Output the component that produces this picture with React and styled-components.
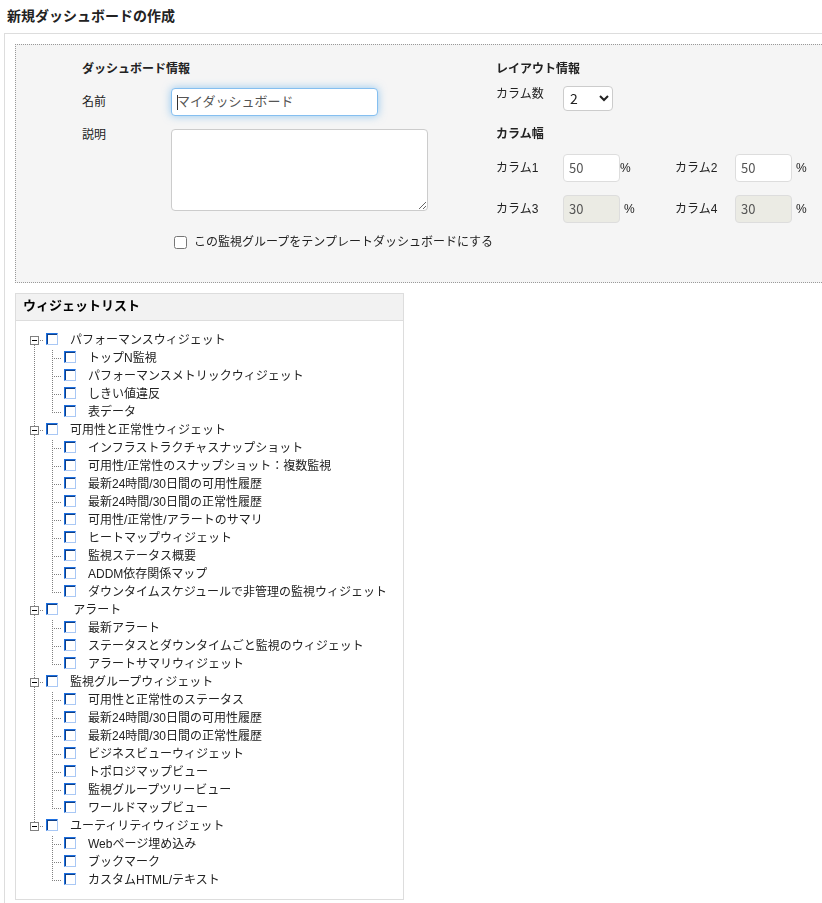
import React, { useState } from "react";
import styled, { createGlobalStyle, css } from "styled-components";

const COLORS = {
  text: "#222",
  muted: "#555",
  border: "#ddd",
  panel: "#f5f5f5",
  dots: "#999",
  tree: "#808080",
};

const GROUPS = [
  {
    name: "パフォーマンスウィジェット",
    items: ["トップN監視", "パフォーマンスメトリックウィジェット", "しきい値違反", "表データ"],
  },
  {
    name: "可用性と正常性ウィジェット",
    items: [
      "インフラストラクチャスナップショット",
      "可用性/正常性のスナップショット：複数監視",
      "最新24時間/30日間の可用性履歴",
      "最新24時間/30日間の正常性履歴",
      "可用性/正常性/アラートのサマリ",
      "ヒートマップウィジェット",
      "監視ステータス概要",
      "ADDM依存関係マップ",
      "ダウンタイムスケジュールで非管理の監視ウィジェット",
    ],
  },
  {
    name: " アラート",
    items: ["最新アラート", "ステータスとダウンタイムごと監視のウィジェット", "アラートサマリウィジェット"],
  },
  {
    name: "監視グループウィジェット",
    items: [
      "可用性と正常性のステータス",
      "最新24時間/30日間の可用性履歴",
      "最新24時間/30日間の正常性履歴",
      "ビジネスビューウィジェット",
      "トポロジマップビュー",
      "監視グループツリービュー",
      "ワールドマップビュー",
    ],
  },
  {
    name: "ユーティリティウィジェット",
    items: ["Webページ埋め込み", "ブックマーク", "カスタムHTML/テキスト"],
  },
];

const GlobalStyle = createGlobalStyle`
  * {
    box-sizing: border-box;
  }
  body {
    margin: 0;
    background: #fff;
    color: ${COLORS.text};
    font: 12px/18px "Liberation Sans", "Noto Sans CJK JP", sans-serif;
    overflow-x: hidden;
  }
  input, textarea, select, button {
    margin: 0;
    font-family: inherit;
  }
`;

const Page = styled.main`
  padding-left: 4px;
`;

const Title = styled.h1`
  margin: 0;
  padding: 6px 3px 7px;
  font-size: 14px;
  line-height: 20px;
`;

const Content = styled.div`
  padding: 10px 0 20px 10px;
  border-top: 1px solid ${COLORS.border};
  border-left: 1px solid ${COLORS.border};
`;

const DashboardForm = styled.form`
  display: grid;
  grid-template-columns: 414px 1fr;
  padding: 14px 0 31px 66px;
  background: ${COLORS.panel};
  border: 1px dotted ${COLORS.dots};
  border-right: 0;
`;

const SectionTitle = styled.h2`
  margin: 0;
  font-size: 12px;
  line-height: 20px;
`;

const Field = styled.div`
  display: grid;
  grid-template-columns: 89px 1fr;
  align-items: start;
  margin-top: ${({ $gap }) => $gap}px;
`;

const Label = styled.label`
  line-height: ${({ $line }) => $line || 28}px;
`;

const control = css`
  border: 1px solid #ccc;
  border-radius: 4px;
  background-color: #fff;
  color: ${COLORS.muted};
`;

const NameInput = styled.input`
  ${control}
  width: 207px;
  height: 28px;
  padding: 2px 5px 4px;
  font-size: 13px;
  outline: 0;
  border-color: #85bff0;
  box-shadow: 0 0 8px rgba(82, 168, 236, 0.6);
  &::placeholder {
    color: ${COLORS.muted};
    opacity: 1;
  }
  &:placeholder-shown {
    caret-color: transparent;
    background: linear-gradient(#333, #333) 5px center / 1px 15px no-repeat #fff;
  }
`;

const Description = styled.textarea`
  ${control}
  display: block;
  width: 257px;
  height: 82px;
`;

const TemplateOption = styled.div`
  display: flex;
  align-items: center;
  gap: 7px;
  margin: 22px 0 0 92px;
  white-space: nowrap;
  input {
    width: 13px;
    height: 13px;
  }
`;

const CountRow = styled.div`
  display: grid;
  grid-template-columns: 67px 1fr;
  align-items: start;
  margin: 7px 0 13px;
`;

const CountSelect = styled.select`
  ${control}
  width: 50px;
  height: 25px;
  padding: 0 2px 2px;
  color: #222;
  font: 14px "Noto Sans CJK JP", sans-serif;
`;

const WidthGrid = styled.div`
  display: grid;
  grid-template-columns: 67px 112px 60px 1fr;
  row-gap: 13px;
  margin-top: 10px;
`;

const Percent = styled.span`
  display: flex;
  align-items: center;
  gap: ${({ $tight }) => ($tight ? 0 : 4)}px;
`;

const WidthInput = styled.input`
  ${control}
  width: 57px;
  height: 28px;
  padding: 0 5px 2px;
  border-color: ${COLORS.border};
  font: 13px "Noto Sans CJK JP", sans-serif;
  &:disabled {
    background-color: #ebebe4;
  }
`;

const WidgetPanel = styled.section`
  width: 389px;
  margin-top: 10px;
  border: 1px solid ${COLORS.border};
`;

const PanelTitle = styled.h2`
  margin: 0;
  padding: 2px 7px 4px;
  border-bottom: 1px solid ${COLORS.border};
  background: #f2f2f2;
  color: #000;
  font-size: 13px;
  line-height: 20px;
`;

const Tree = styled.ul`
  margin: 0;
  padding: 10px;
  list-style: none;
  ul {
    margin: 0;
    padding: 0;
    list-style: none;
  }
`;

const Row = styled.div`
  display: flex;
  height: 18px;
`;

const dotsDown = `repeating-linear-gradient(180deg, ${COLORS.tree} 0 1px, transparent 1px 2px)`;
const dotsAcross = `repeating-linear-gradient(90deg, ${COLORS.tree} 0 1px, transparent 1px 2px)`;

const Cell = styled.span`
  display: flex;
  flex: none;
  align-items: flex-start;
  width: 18px;
  height: 18px;
  padding: 2px;
`;

const Rail = styled(Cell)`
  background: ${({ $line }) => ($line ? `${dotsDown} 8px 0 / 1px 18px no-repeat` : "none")};
`;

const Elbow = styled(Cell)`
  background: ${dotsDown} 8px 1px / 1px ${({ $last }) => ($last ? 9 : 17)}px no-repeat,
    ${dotsAcross} 8px 9px / 9px 1px no-repeat;
`;

const Branch = styled(Cell)`
  padding: 5px 0 0 4px;
  background: ${({ $first }) => ($first ? "none" : `${dotsDown} 8px 0 / 1px 5px no-repeat`)},
    ${({ $last }) => ($last ? "none" : `${dotsDown} 8px 14px / 1px 4px no-repeat`)},
    ${dotsAcross} 14px 9px / 3px 1px no-repeat;
`;

const Toggle = styled.button`
  width: 9px;
  height: 9px;
  padding: 0;
  border: 1px solid #808080;
  background: linear-gradient(#000, #000) center / 5px 1px no-repeat #fff;
  ${({ $open }) =>
    !$open &&
    css`
      background: linear-gradient(#000, #000) center / 5px 1px no-repeat,
        linear-gradient(#000, #000) center / 1px 5px no-repeat, #fff;
    `}
`;

const TreeCheckbox = styled.input`
  appearance: none;
  width: 12px;
  height: 12px;
  border: 1px solid;
  border-color: #1c6fe0 #a9c8f5 #a9c8f5 #1c6fe0;
  background: #fff;
  box-shadow: inset 1px 1px 0 #0f4088;
  &:checked {
    background: #1c6fe0;
  }
`;

const TreeLabel = styled.label`
  padding-left: 8px;
  white-space: pre;
`;

function WidthField({ n, value, tight, disabled }) {
  return (
    <>
      <Label htmlFor={`width${n}`}>カラム{n}</Label>
      <Percent $tight={tight}>
        <WidthInput id={`width${n}`} defaultValue={value} disabled={disabled} />%
      </Percent>
    </>
  );
}

function TreeEntry({ id, children }) {
  return (
    <>
      <Cell>
        <TreeCheckbox type="checkbox" id={id} />
      </Cell>
      <TreeLabel htmlFor={id}>{children}</TreeLabel>
    </>
  );
}

function TreeGroup({ group, index, first, last }) {
  const [open, setOpen] = useState(true);
  return (
    <li>
      <Row>
        <Branch $first={first} $last={last}>
          <Toggle
            type="button"
            $open={open}
            aria-expanded={open}
            aria-label={group.name}
            onClick={() => setOpen(!open)}
          />
        </Branch>
        <TreeEntry id={`group${index}`}>{group.name}</TreeEntry>
      </Row>
      {open && (
        <ul>
          {group.items.map((item, i) => (
            <li key={item}>
              <Row>
                <Rail $line={!last} />
                <Elbow $last={i === group.items.length - 1} />
                <TreeEntry id={`widget${index}-${i}`}>{item}</TreeEntry>
              </Row>
            </li>
          ))}
        </ul>
      )}
    </li>
  );
}

export default function App() {
  return (
    <Page>
      <GlobalStyle />
      <Title>新規ダッシュボードの作成</Title>
      <Content>
        <DashboardForm>
          <div>
            <SectionTitle>ダッシュボード情報</SectionTitle>
            <Field $gap={9}>
              <Label htmlFor="name">名前</Label>
              <NameInput id="name" placeholder="マイダッシュボード" autoFocus />
            </Field>
            <Field $gap={13}>
              <Label htmlFor="description" $line={12}>説明</Label>
              <Description id="description" />
            </Field>
            <TemplateOption>
              <input type="checkbox" id="template" />
              <label htmlFor="template">この監視グループをテンプレートダッシュボードにする</label>
            </TemplateOption>
          </div>
          <div>
            <SectionTitle>レイアウト情報</SectionTitle>
            <CountRow>
              <Label htmlFor="count" $line={16}>カラム数</Label>
              <CountSelect id="count" defaultValue="2">
                <option>1</option>
                <option>2</option>
                <option>3</option>
                <option>4</option>
              </CountSelect>
            </CountRow>
            <SectionTitle>カラム幅</SectionTitle>
            <WidthGrid>
              <WidthField n={1} value="50" tight />
              <WidthField n={2} value="50" />
              <WidthField n={3} value="30" disabled />
              <WidthField n={4} value="30" disabled />
            </WidthGrid>
          </div>
        </DashboardForm>
        <WidgetPanel>
          <PanelTitle>ウィジェットリスト</PanelTitle>
          <Tree>
            {GROUPS.map((group, i) => (
              <TreeGroup
                key={group.name}
                group={group}
                index={i}
                first={i === 0}
                last={i === GROUPS.length - 1}
              />
            ))}
          </Tree>
        </WidgetPanel>
      </Content>
    </Page>
  );
}
